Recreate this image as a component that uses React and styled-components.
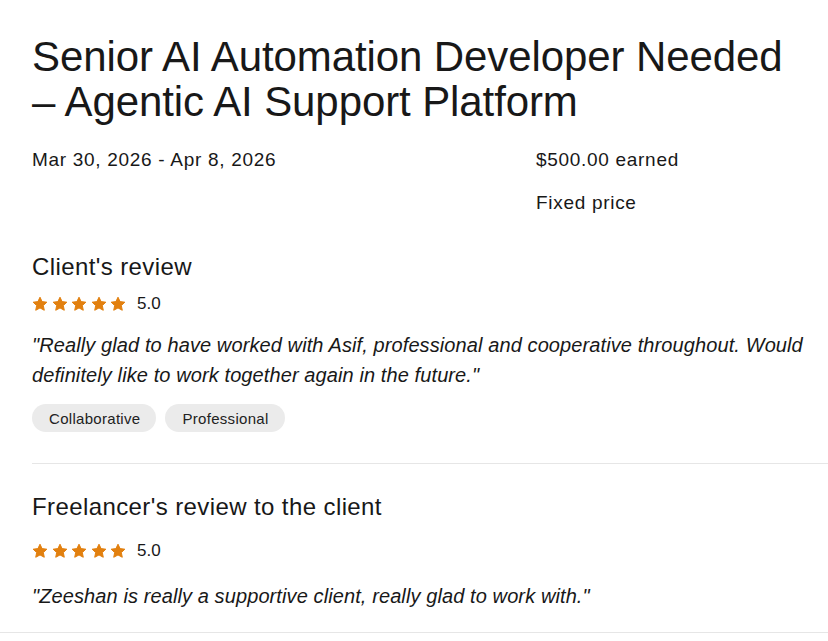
import React from "react";
import styled, { createGlobalStyle } from "styled-components";

const GlobalStyle = createGlobalStyle`
  html, body {
    margin: 0;
    padding: 0;
    background: #ffffff;
  }
  body {
    font-family: "Liberation Sans", Arial, sans-serif;
    color: #181818;
  }
`;

const Page = styled.div`
  width: 828px;
  padding-top: 34px;
  box-sizing: border-box;
`;

const Inner = styled.div`
  padding-left: 32px;
`;

const Title = styled.h1`
  margin: 0;
  font-size: 42px;
  line-height: 45px;
  font-weight: 400;
  letter-spacing: -0.1px;
  width: 780px;
`;

const Meta = styled.div`
  display: grid;
  grid-template-columns: 504px auto;
  margin-top: 24px;
  font-size: 19px;
  line-height: 24px;
  letter-spacing: 0.7px;
`;

const MetaCol = styled.div`
  display: flex;
  flex-direction: column;
  gap: 19px;
`;

const Heading = styled.h2`
  margin: ${(p) => p.$top}px 0 0;
  font-size: 24px;
  line-height: 28px;
  font-weight: 400;
  letter-spacing: 0.4px;
`;

const RatingRow = styled.div`
  display: flex;
  align-items: center;
  gap: 11px;
  height: 20px;
  margin-top: ${(p) => p.$top}px;
`;

const Stars = styled.div`
  display: flex;
  gap: 3.5px;
`;

const Score = styled.span`
  font-size: 17px;
  line-height: 20px;
`;

const Quote = styled.p`
  margin: ${(p) => p.$top}px 0 0;
  font-size: 20px;
  line-height: 30px;
  font-style: italic;
  letter-spacing: 0.1px;
  width: 790px;
`;

const Chips = styled.div`
  display: flex;
  gap: 9px;
  margin-top: 14px;
`;

const Chip = styled.span`
  display: inline-flex;
  align-items: center;
  height: 28px;
  padding: 0 16px 0 17px;
  border-radius: 14px;
  background: #ebebeb;
  font-size: 15px;
  letter-spacing: 0.3px;
  color: #222;
`;

const Divider = styled.hr`
  border: 0;
  border-top: 1px solid #e6e6e6;
  margin: 31px 0 0;
`;

const BottomLine = styled.div`
  border-top: 1px solid #e6e6e6;
  margin-top: 21px;
`;

const Star = () => (
  <svg width="16" height="16" viewBox="0 0 24 24">
    <path
      d="M12 1.8l3.1 6.6 7.2.9-5.3 5 1.4 7.1L12 17.9l-6.4 3.5L7 14.3 1.7 9.3l7.2-.9z"
      fill="#e2800f"
      stroke="#e2800f"
      strokeWidth="1.5"
      strokeLinejoin="round"
    />
  </svg>
);

const Rating = ({ top }) => (
  <RatingRow $top={top}>
    <Stars>
      {[0, 1, 2, 3, 4].map((i) => (
        <Star key={i} />
      ))}
    </Stars>
    <Score>5.0</Score>
  </RatingRow>
);

export default function App() {
  return (
    <Page>
      <GlobalStyle />
      <Inner>
        <Title>Senior AI Automation Developer Needed – Agentic AI Support Platform</Title>
        <Meta>
          <div>Mar 30, 2026 - Apr 8, 2026</div>
          <MetaCol>
            <div>$500.00 earned</div>
            <div>Fixed price</div>
          </MetaCol>
        </Meta>

        <Heading $top={38}>Client's review</Heading>
        <Rating top={13} />
        <Quote $top={16}>
          "Really glad to have worked with Asif, professional and cooperative throughout. Would
          definitely like to work together again in the future."
        </Quote>
        <Chips>
          <Chip>Collaborative</Chip>
          <Chip>Professional</Chip>
        </Chips>
        <Divider />

        <Heading $top={29}>Freelancer's review to the client</Heading>
        <Rating top={20} />
        <Quote $top={20}>"Zeeshan is really a supportive client, really glad to work with."</Quote>
      </Inner>
      <BottomLine />
    </Page>
  );
}
